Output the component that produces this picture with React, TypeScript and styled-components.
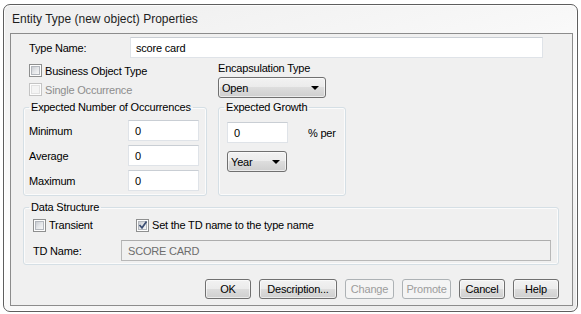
import styled, { createGlobalStyle } from 'styled-components';

const GlobalStyle = createGlobalStyle`
  html, body {
    margin: 0;
    padding: 0;
    background: #ffffff;
  }
  body {
    font-family: "Liberation Sans", Arial, sans-serif;
    font-size: 11px;
    letter-spacing: -0.2px;
    color: #000;
  }
  * { box-sizing: border-box; }
`;

const Window = styled.div`
  margin: 4px 0 0 3px;
  width: 575px;
  height: 308px;
  border: 1px solid #5e5e5e;
  border-radius: 7px;
  background: linear-gradient(165deg, #eeeeee 0%, #f8f8f8 35%, #ffffff 55%, #f1f1f1 80%, #e9e9e9 100%);
  box-shadow: inset 0 0 0 1px rgba(255, 255, 255, 0.85);
  display: flex;
  flex-direction: column;
`;

const TitleBar = styled.div`
  height: 28px;
  padding: 0 0 1px 8px;
  display: flex;
  align-items: center;
  font-size: 12px;
  letter-spacing: 0;
  color: #1e1e1e;
`;

const Client = styled.div`
  flex: 1;
  margin: 0 4px 5px 6px;
  border: 1px solid #8c8c8c;
  background: #f0f0f0;
  padding: 0 0 0 12px;
  display: flex;
  flex-direction: column;
`;

const NameRow = styled.div`
  display: flex;
  align-items: center;
  margin-top: 3px;
  height: 21px;
`;

const Label = styled.span<{ $width?: number; $indent?: number; $muted?: boolean }>`
  display: inline-block;
  width: ${p => (p.$width ? `${p.$width}px` : 'auto')};
  padding-left: ${p => p.$indent ?? 0}px;
  color: ${p => (p.$muted ? '#8d8d8d' : '#000')};
  white-space: nowrap;
`;

const TextField = styled.div<{ $width: number; $disabled?: boolean; $pad?: number }>`
  width: ${p => p.$width}px;
  height: 21px;
  display: flex;
  align-items: center;
  padding-left: ${p => p.$pad ?? 5}px;
  background: ${p => (p.$disabled ? '#f0f0f0' : '#ffffff')};
  border: 1px solid ${p => (p.$disabled ? '#b8b8b8' : '#dfe3e8')};
  border-top-color: ${p => (p.$disabled ? '#adadad' : '#c9ced4')};
  color: ${p => (p.$disabled ? '#6d6d6d' : '#000')};
`;

const OptionsRow = styled.div`
  display: flex;
  margin-top: 3px;
  height: 39px;
`;

const CheckColumn = styled.div`
  width: 195px;
  display: flex;
  flex-direction: column;
`;

const CheckItem = styled.label<{ $height?: number; $indent?: number; $width?: number }>`
  display: flex;
  align-items: center;
  gap: 3px;
  height: ${p => p.$height ?? 19}px;
  padding-left: ${p => p.$indent ?? 6}px;
  width: ${p => (p.$width ? `${p.$width}px` : 'auto')};
`;

const Box = styled.span<{ $checked?: boolean; $disabled?: boolean }>`
  flex: none;
  width: 13px;
  height: 13px;
  border: 1px solid ${p => (p.$disabled ? '#c4c4c4' : '#8e8f8f')};
  padding: 1px;
  background: #fdfdfd;
  display: flex;

  &::before {
    content: '';
    flex: 1;
    border: 1px solid ${p => (p.$disabled ? '#e2e2e2' : '#b3b7bd')};
    background: ${p =>
      p.$disabled
        ? '#f4f4f4'
        : 'linear-gradient(135deg, #c9ccd1 0%, #e4e6e9 50%, #f7f7f7 100%)'};
  }

  svg {
    position: absolute;
  }
`;

const BoxWrap = styled.span`
  position: relative;
  display: inline-flex;
  flex: none;

  svg {
    position: absolute;
    left: 2px;
    top: 1px;
  }
`;

const ComboColumn = styled.div`
  display: flex;
  flex-direction: column;
  padding-top: 1px;
`;

const Combo = styled.div<{ $width: number }>`
  width: ${p => p.$width}px;
  height: 21px;
  margin-top: 3px;
  border: 1px solid #707070;
  border-radius: 3px;
  background: linear-gradient(#f2f2f2 0%, #ebebeb 49%, #dddddd 50%, #cfcfcf 100%);
  box-shadow: inset 0 0 0 1px rgba(255, 255, 255, 0.6);
  display: flex;
  align-items: center;
  justify-content: space-between;
  padding: 0 6px 0 3px;
`;

const Arrow = styled.span`
  width: 0;
  height: 0;
  border-left: 4px solid transparent;
  border-right: 4px solid transparent;
  border-top: 4px solid #000;
`;

const GroupsRow = styled.div`
  display: flex;
  gap: 11px;
`;

const Group = styled.fieldset<{ $width: number; $height: number }>`
  margin: 0;
  padding: 0;
  width: ${p => p.$width}px;
  height: ${p => p.$height}px;
  border: 1px solid #d5dfe5;
  border-radius: 3px;
  box-shadow: inset 0 0 0 1px rgba(255, 255, 255, 0.7);
  min-width: 0;
`;

const Legend = styled.legend`
  margin-left: 5px;
  padding: 0 2px;
  line-height: 14px;
  color: #000;
`;

const FieldRows = styled.div`
  display: flex;
  flex-direction: column;
  gap: 4px;
  padding: 6px 0 0 5px;
`;

const FieldRow = styled.div`
  display: flex;
  align-items: center;
`;

const GrowthBody = styled.div`
  padding: 8px 0 0 8px;
  display: flex;
  flex-direction: column;
  gap: 8px;

  ${Combo} {
    margin-top: 0;
  }
`;

const DataBody = styled.div`
  padding: 4px 0 0 9px;
  display: flex;
  flex-direction: column;
`;

const DataChecks = styled.div`
  display: flex;
  height: 14px;
`;

const DataNameRow = styled.div`
  display: flex;
  align-items: center;
  margin-top: 8px;
`;

const DataGroup = styled(Group)`
  margin-top: 4px;
`;

const ButtonRow = styled.div`
  display: flex;
  justify-content: flex-end;
  gap: 8px;
  width: 536px;
  margin-top: 14px;
`;

const Button = styled.button<{ $width: number }>`
  width: ${p => p.$width}px;
  height: 20px;
  padding: 0;
  font-family: inherit;
  font-size: 11px;
  letter-spacing: -0.2px;
  color: #000;
  border: 1px solid #707070;
  border-radius: 3px;
  background: linear-gradient(#f2f2f2 0%, #ebebeb 49%, #dddddd 50%, #cfcfcf 100%);
  box-shadow: inset 0 0 0 1px rgba(255, 255, 255, 0.6);

  &:disabled {
    color: #9c9c9c;
    border-color: #adb2b5;
    background: #f4f4f4;
    box-shadow: none;
  }
`;

const Check = ({ checked, disabled }: { checked?: boolean; disabled?: boolean }) => (
  <BoxWrap>
    <Box $checked={checked} $disabled={disabled} />
    {checked && (
      <svg width="10" height="10" viewBox="0 0 10 10">
        <path d="M1.5 5 L4 7.8 L8.5 1.5" fill="none" stroke="#3c4f74" strokeWidth="1.7" />
      </svg>
    )}
  </BoxWrap>
);

export default function App() {
  return (
    <>
      <GlobalStyle />
      <Window>
        <TitleBar>Entity Type (new object) Properties</TitleBar>
        <Client>
          <NameRow>
            <Label $width={107} $indent={6}>Type Name:</Label>
            <TextField $width={413}>score card</TextField>
          </NameRow>

          <OptionsRow>
            <CheckColumn>
              <CheckItem>
                <Check />
                <Label>Business Object Type</Label>
              </CheckItem>
              <CheckItem>
                <Check disabled />
                <Label $muted>Single Occurrence</Label>
              </CheckItem>
            </CheckColumn>
            <ComboColumn>
              <Label>Encapsulation Type</Label>
              <Combo $width={108}>
                <span>Open</span>
                <Arrow />
              </Combo>
            </ComboColumn>
          </OptionsRow>

          <GroupsRow>
            <Group $width={184} $height={96}>
              <Legend>Expected Number of Occurrences</Legend>
              <FieldRows>
                <FieldRow>
                  <Label $width={99}>Minimum</Label>
                  <TextField $width={71} $pad={6}>0</TextField>
                </FieldRow>
                <FieldRow>
                  <Label $width={99}>Average</Label>
                  <TextField $width={71} $pad={6}>0</TextField>
                </FieldRow>
                <FieldRow>
                  <Label $width={99}>Maximum</Label>
                  <TextField $width={71} $pad={6}>0</TextField>
                </FieldRow>
              </FieldRows>
            </Group>

            <Group $width={128} $height={96}>
              <Legend>Expected Growth</Legend>
              <GrowthBody>
                <FieldRow>
                  <TextField $width={61} $pad={6}>0</TextField>
                  <Label $indent={20}>% per</Label>
                </FieldRow>
                <Combo $width={60}>
                  <span>Year</span>
                  <Arrow />
                </Combo>
              </GrowthBody>
            </Group>
          </GroupsRow>

          <DataGroup $width={536} $height={65}>
            <Legend>Data Structure</Legend>
            <DataBody>
              <DataChecks>
                <CheckItem $height={14} $indent={0} $width={103}>
                  <Check />
                  <Label>Transient</Label>
                </CheckItem>
                <CheckItem $height={14} $indent={0}>
                  <Check checked />
                  <Label>Set the TD name to the type name</Label>
                </CheckItem>
              </DataChecks>
              <DataNameRow>
                <Label $width={88}>TD Name:</Label>
                <TextField $width={430} $disabled $pad={6}>SCORE CARD</TextField>
              </DataNameRow>
            </DataBody>
          </DataGroup>

          <ButtonRow>
            <Button $width={46}>OK</Button>
            <Button $width={78}>Description...</Button>
            <Button $width={49} disabled>Change</Button>
            <Button $width={49} disabled>Promote</Button>
            <Button $width={46}>Cancel</Button>
            <Button $width={46}>Help</Button>
          </ButtonRow>
        </Client>
      </Window>
    </>
  );
}
